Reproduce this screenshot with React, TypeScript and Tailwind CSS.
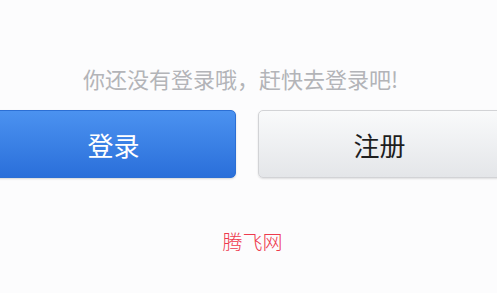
import React from "react";

export default function App() {
  return (
    <div
      className="w-[497px] h-[293px] overflow-hidden bg-[#fcfcfd] flex flex-col"
      style={{ fontFamily: '"Noto Sans CJK SC", "Noto Sans", sans-serif' }}
    >
      <div className="mt-[63px] h-[30px] leading-[30px] text-[22px] text-[#b3b4b8] text-center pr-[16px]">
        你还没有登录哦，赶快去登录吧!
      </div>
      <div className="mt-[17px] flex justify-center gap-[22px] pr-[4px]">
        <button className="shrink-0 w-[244px] h-[68px] rounded-[5px] border border-[#2c6fd4] bg-gradient-to-b from-[#4b92f0] to-[#2a6fda] text-white text-[26px] shadow-[0_1px_2px_rgba(0,0,0,0.15)]">
          登录
        </button>
        <button className="shrink-0 w-[244px] h-[68px] rounded-[5px] border border-[#d2d3d6] bg-gradient-to-b from-[#f9fafb] to-[#e4e6e9] text-[#1e1e1e] text-[26px] shadow-[0_1px_2px_rgba(0,0,0,0.12)]">
          注册
        </button>
      </div>
      <div className="mt-[50px] h-[28px] leading-[28px] text-[20px] font-light text-[#ee3a4e] text-center pl-[8px]">
        腾飞网
      </div>
    </div>
  );
}
